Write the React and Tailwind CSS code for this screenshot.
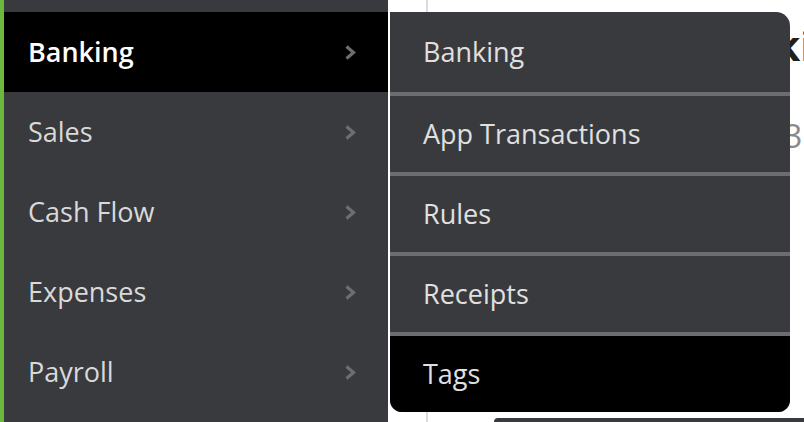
const sideItems = ['Banking', 'Sales', 'Cash Flow', 'Expenses', 'Payroll'];
const subItems = ['Banking', 'App Transactions', 'Rules', 'Receipts', 'Tags'];

const Chevron = () => (
    <svg width="13" height="15" viewBox="0 0 13 15" className="flex-shrink-0">
        <path d="M2.5 1.5 L9.5 7.5 L2.5 13.5" fill="none" stroke="#6d6e72" strokeWidth="3.2"/>
    </svg>
);

export default function App() {
    return (
        <div className="relative w-[804px] h-[422px] overflow-hidden bg-white flex font-['Open_Sans',sans-serif]">

            {/* Sidebar */}
            <div className="w-[388px] flex-shrink-0 bg-[#393a3e] border-l-4 border-[#6cb93f] pt-3">
                {sideItems.map((item, i) => (
                    <div key={item}
                         className={`h-20 flex items-center justify-between pl-[24px] pr-[31px] text-[27px] ${i === 0 ? 'bg-black text-white font-semibold' : 'text-[#d9d9d9]'}`}>
                        <span>{item}</span>
                        <Chevron/>
                    </div>
                ))}
            </div>

            {/* Page behind the menu */}
            <div className="flex-1 ml-[2px] flex">
                <div className="w-[38px] border-r-2 border-[#dcdcdc]"></div>
                <div className="flex-1 flex flex-col">
                    <div className="h-[90px] flex items-center pl-[265px] text-[42px] leading-none font-bold text-[#1f1f1f] whitespace-nowrap">Banking</div>
                    <div className="mt-[30px] pl-[356px] text-[32px] leading-none text-[#8a8a8a]">3</div>
                    <div className="mt-auto ml-[66px] h-1 bg-[#393a3e] rounded-tl-[12px]"></div>
                </div>
            </div>

            {/* Submenu */}
            <div className="absolute left-[390px] top-3 w-[400px] h-[400px] bg-[#393a3e] rounded-tr-[14px] rounded-b-[12px] overflow-hidden flex flex-col">
                {subItems.map((item, i) => (
                    <div key={item}
                         className={`h-20 flex-shrink-0 flex items-center pl-[33px] text-[27px] text-[#e0e0e0] ${i === 4 ? 'bg-black' : ''} ${i > 0 ? 'border-t-4 border-[#6c6d71]' : ''}`}>
                        {item}
                    </div>
                ))}
            </div>
        </div>
    );
}
